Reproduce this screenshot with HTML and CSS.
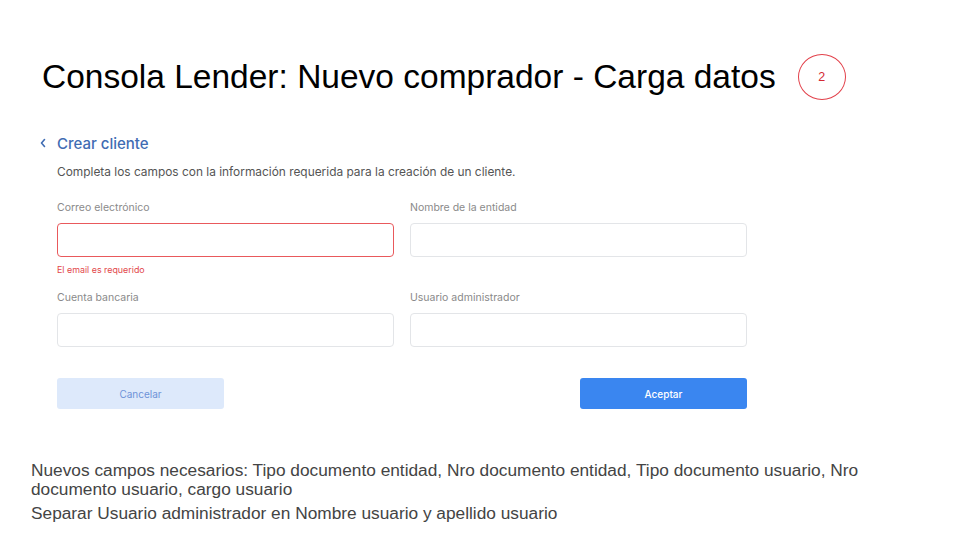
FILE: index.html
```html
<!DOCTYPE html>
<html lang="es">
<head>
<meta charset="utf-8">
<link rel="stylesheet" href="styles.css">
</head>
<body>
<div class="slide">
  <header class="title-row">
    <h1 class="title">Consola Lender: Nuevo comprador - Carga datos</h1>
    <span class="step">2</span>
  </header>
  <section class="form-card">
    <div class="back">
      <svg class="chev" width="8" height="10" viewBox="0 0 8 10"><path d="M5.5 1.5 L2.5 5 L5.5 8.5" fill="none" stroke="#3f6cb3" stroke-width="1.6" stroke-linecap="round" stroke-linejoin="round"/></svg>
      <span class="back-text">Crear cliente</span>
    </div>
    <p class="intro">Completa los campos con la información requerida para la creación de un cliente.</p>
    <div class="grid">
      <div class="field">
        <label class="label">Correo electrónico</label>
        <div class="input input-error"></div>
        <div class="error">El email es requerido</div>
      </div>
      <div class="field">
        <label class="label">Nombre de la entidad</label>
        <div class="input"></div>
      </div>
      <div class="field row2">
        <label class="label">Cuenta bancaria</label>
        <div class="input"></div>
      </div>
      <div class="field row2">
        <label class="label">Usuario administrador</label>
        <div class="input"></div>
      </div>
    </div>
    <div class="actions">
      <button class="btn btn-cancel">Cancelar</button>
      <button class="btn btn-ok">Aceptar</button>
    </div>
  </section>
  <section class="notes">
    <p>Nuevos campos necesarios: Tipo documento entidad, Nro documento entidad, Tipo documento usuario, Nro documento usuario, cargo usuario</p>
    <p>Separar Usuario administrador en Nombre usuario y apellido usuario</p>
  </section>
</div>
</body>
</html>
```
FILE: styles.css
```css
* { box-sizing: border-box; }
html, body { margin: 0; padding: 0; background: #fff; }
.slide {
  width: 960px;
  height: 540px;
  overflow: hidden;
  font-family: "Liberation Sans", Arial, sans-serif;
}
.title-row {
  display: flex;
  align-items: center;
  padding: 54px 0 0 42px;
}
.title {
  margin: 0;
  font-weight: normal;
  font-size: 33.5px;
  line-height: 40px;
  color: #000;
}
.step {
  margin-left: 22px;
  width: 48px;
  height: 46px;
  border: 1px solid #e2404a;
  border-radius: 50%;
  display: flex;
  align-items: center;
  justify-content: center;
  color: #d42a33;
  font-size: 12.5px;
  font-family: "Liberation Sans", Arial, sans-serif;
}
.form-card {
  margin-left: 39px;
  width: 708px;
  font-family: Inter, "Noto Sans", sans-serif;
}
.back {
  display: flex;
  align-items: center;
  gap: 10px;
  height: 20px;
  margin-top: 33px;
}
.back-text {
  color: #3f6cb3;
  font-size: 15px;
  font-weight: 500;
}
.intro {
  margin: 11px 0 0 18px;
  font-size: 11.9px;
  color: #555;
  line-height: 16px;
}
.grid {
  margin: 21px 0 0 18px;
  display: grid;
  grid-template-columns: 337px 337px;
  column-gap: 16px;
}
.field { display: flex; flex-direction: column; }
.row2 { margin-top: 15px; }
.label {
  font-size: 10.5px;
  color: #8a8a8a;
  line-height: 14px;
  height: 14px;
}
.input {
  margin-top: 8px;
  height: 34px;
  border: 1px solid #e3e5e8;
  border-radius: 4px;
  background: #fff;
}
.input-error {
  border: 1.5px solid #e9595c;
}
.error {
  margin-top: 7px;
  font-size: 8.9px;
  color: #e2474b;
  line-height: 12px;
  height: 12px;
}
.actions {
  margin: 31px 0 0 18px;
  display: flex;
  justify-content: space-between;
}
.btn {
  width: 167px;
  height: 31px;
  border: 0;
  border-radius: 3px;
  font-family: Inter, "Noto Sans", sans-serif;
  font-size: 10px;
}
.btn-cancel { background: #dde9fb; color: #6e93d8; }
.btn-ok { background: #3a86f0; color: #fff; font-weight: 500; }
.notes {
  margin: 52px 0 0 31px;
  width: 870px;
  color: #444;
  font-size: 17.3px;
  line-height: 19px;
}
.notes p { margin: 0; }
.notes p + p { margin-top: 5px; }
```
